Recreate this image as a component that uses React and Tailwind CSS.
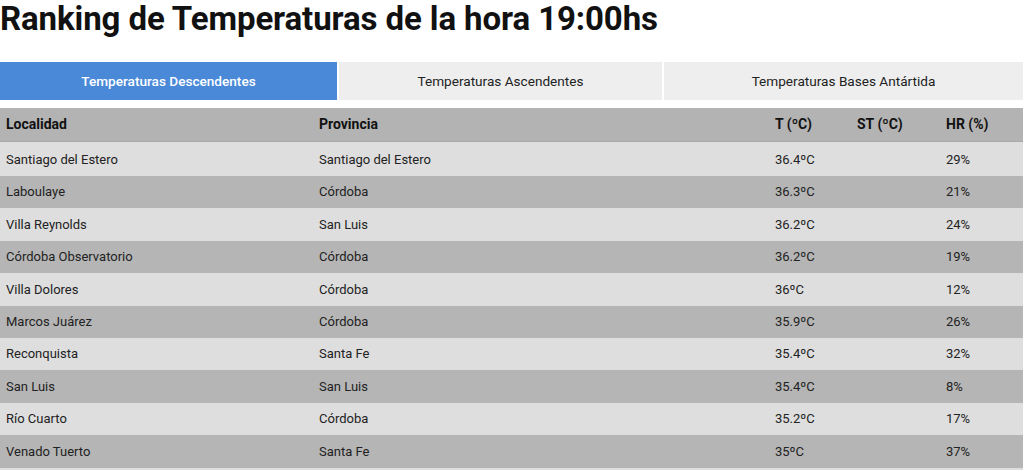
import React from "react";

const rows = [
  ["Santiago del Estero", "Santiago del Estero", "36.4ºC", "", "29%"],
  ["Laboulaye", "Córdoba", "36.3ºC", "", "21%"],
  ["Villa Reynolds", "San Luis", "36.2ºC", "", "24%"],
  ["Córdoba Observatorio", "Córdoba", "36.2ºC", "", "19%"],
  ["Villa Dolores", "Córdoba", "36ºC", "", "12%"],
  ["Marcos Juárez", "Córdoba", "35.9ºC", "", "26%"],
  ["Reconquista", "Santa Fe", "35.4ºC", "", "32%"],
  ["San Luis", "San Luis", "35.4ºC", "", "8%"],
  ["Río Cuarto", "Córdoba", "35.2ºC", "", "17%"],
  ["Venado Tuerto", "Santa Fe", "35ºC", "", "37%"],
];

const grid = "grid grid-cols-[313px_456px_82px_89px_1fr] items-center pl-[6px]";

export default function App() {
  return (
    <div className="w-[1023px] h-[470px] overflow-hidden bg-white text-[#222]" style={{ fontFamily: "Roboto, 'Liberation Sans', sans-serif" }}>
      <h1 className="text-[33px] leading-[38px] font-bold text-[#111] m-0 tracking-[-0.1px]">
        Ranking de Temperaturas de la hora 19:00hs
      </h1>
      <div className="mt-[24px] flex h-[38px] text-[13.6px]">
        <div className="w-[337px] bg-[#4a89d8] text-white font-medium flex items-center justify-center">
          Temperaturas Descendentes
        </div>
        <div className="ml-[2px] w-[323px] bg-[#eeeeee] text-[#222] flex items-center justify-center">
          Temperaturas Ascendentes
        </div>
        <div className="ml-[2px] flex-1 bg-[#eeeeee] text-[#222] flex items-center justify-center">
          Temperaturas Bases Antártida
        </div>
      </div>
      <div className="mt-[8px]">
        <div className={`${grid} h-[34px] bg-[#b3b3b3] border-b border-[#a9a9a9] text-[14px] font-bold text-[#111]`}>
          <div>Localidad</div>
          <div>Provincia</div>
          <div>T (ºC)</div>
          <div>ST (ºC)</div>
          <div>HR (%)</div>
        </div>
        {rows.map((r, i) => (
          <div
            key={i}
            className={`${grid} text-[13px] ${i === 0 ? "h-[34px] pt-[2px]" : "h-[32.4px]"} ${i % 2 === 0 ? "bg-[#dedede]" : "bg-[#b5b5b5]"}`}
          >
            {r.map((c, j) => (
              <div key={j}>{c}</div>
            ))}
          </div>
        ))}
        <div className="h-[32px] bg-[#dedede]" />
      </div>
    </div>
  );
}
